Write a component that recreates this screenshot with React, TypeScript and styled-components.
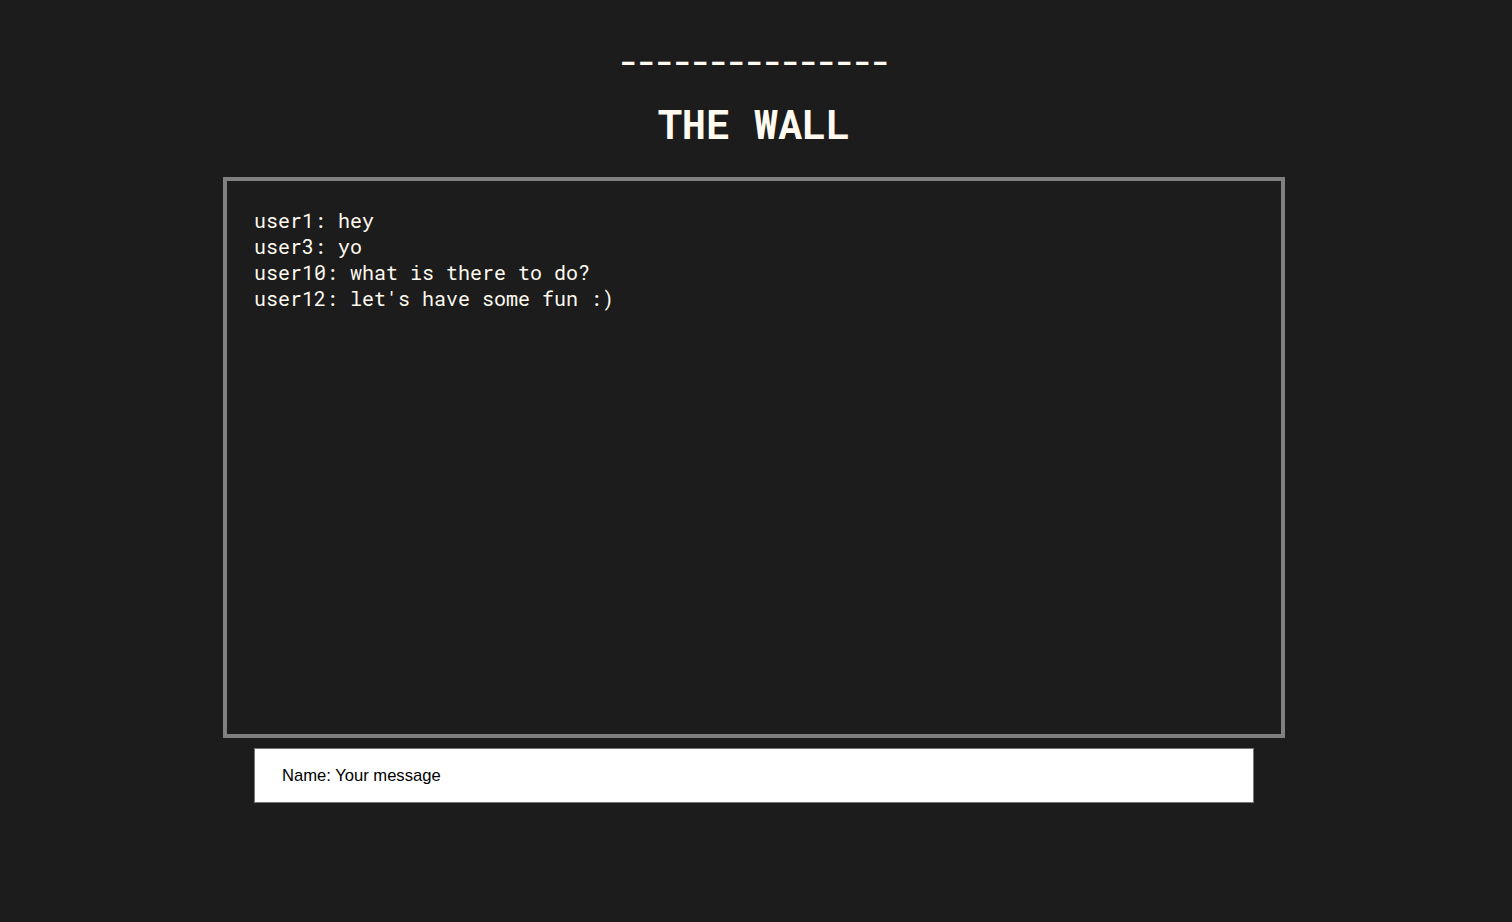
import React from "react";
import styled, { createGlobalStyle } from "styled-components";

const Global = createGlobalStyle`
  html, body { margin: 0; padding: 0; background: #1c1c1c; }
  body { font-family: "Roboto Mono", "DejaVu Sans Mono", "Liberation Mono", monospace; color: #fffaf0; }
`;

const Page = styled.div`
  display: flex;
  flex-direction: column;
  align-items: center;
  min-height: 922px;
  padding: 42px 4px 0 0;
  box-sizing: border-box;
`;

const Rule = styled.div`
  font-size: 30px;
  font-weight: 700;
  line-height: 40px;
  height: 40px;
  margin-right: 2px;
`;

const Title = styled.h1`
  margin: 19px 0 0;
  font-size: 40px;
  font-weight: 700;
  line-height: 46px;
`;

const Wall = styled.div`
  margin-top: 30px;
  width: 1062px;
  height: 561px;
  box-sizing: border-box;
  border: 4px solid #808080;
  padding: 26px 26px 26px 27px;
  display: flex;
  flex-direction: column;
`;

const Line = styled.div`
  font-size: 20px;
  line-height: 26px;
  white-space: pre;
`;

const Input = styled.input`
  margin-top: 10px;
  width: 1000px;
  height: 55px;
  box-sizing: border-box;
  border: 1px solid #767676;
  padding: 0 27px;
  background: #fff;
  font-family: "Liberation Sans", Arial, sans-serif;
  font-size: 16.6px;
  color: #000;
  outline: none;
  &::placeholder { color: #000; opacity: 1; }
`;

const messages = [
  "user1: hey",
  "user3: yo",
  "user10: what is there to do?",
  "user12: let's have some fun :)",
];

export default function App() {
  return (
    <>
      <Global />
      <Page>
        <Rule>---------------</Rule>
        <Title>THE WALL</Title>
        <Wall>
          {messages.map((m) => (
            <Line key={m}>{m}</Line>
          ))}
        </Wall>
        <Input placeholder="Name: Your message" />
      </Page>
    </>
  );
}
